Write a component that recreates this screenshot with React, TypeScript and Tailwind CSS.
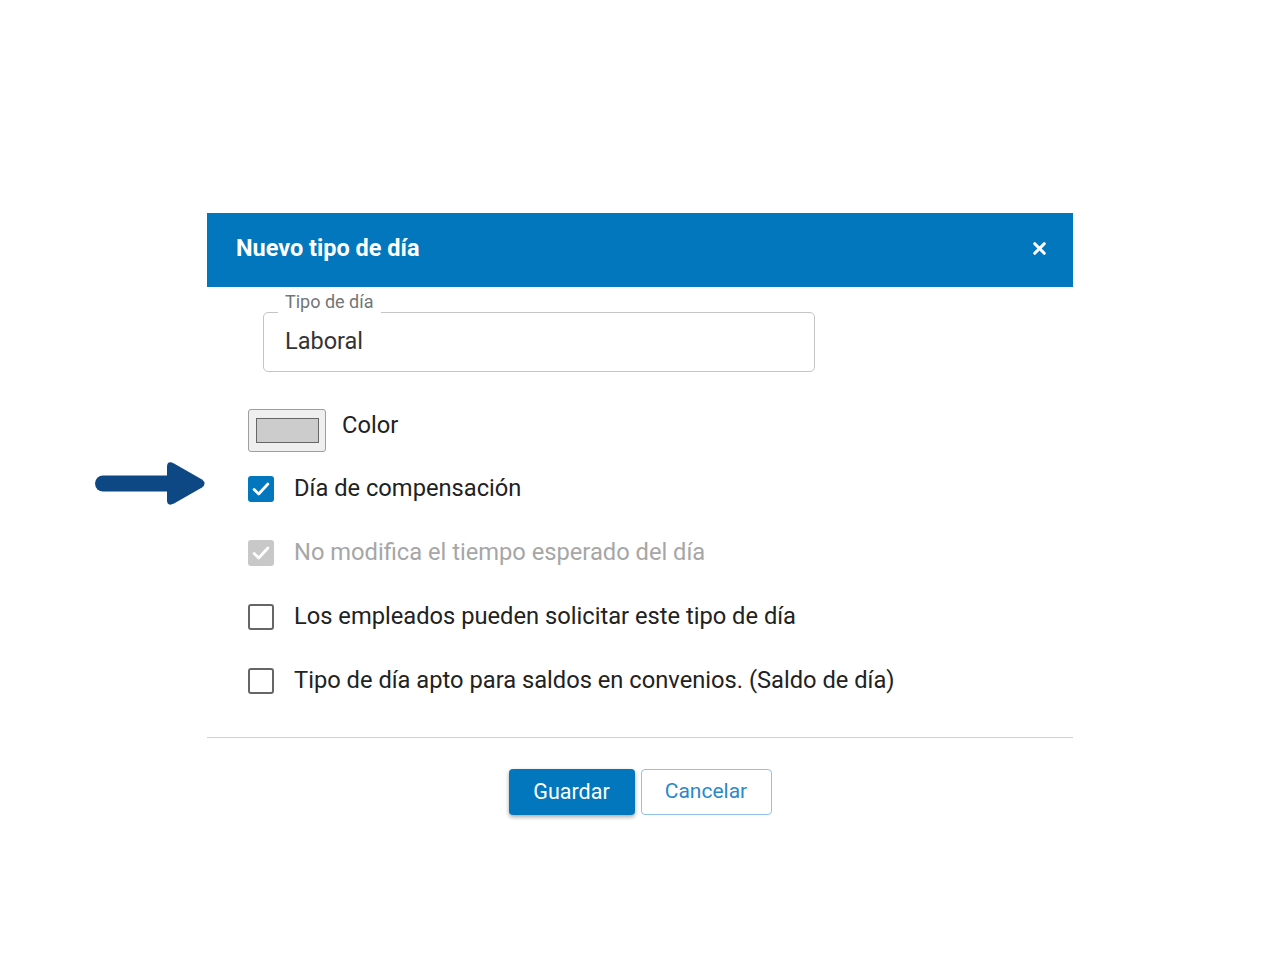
import { X } from 'lucide-react';

const CheckMark = () => (
  <svg viewBox="0 0 24 24" className="w-[22px] h-[22px]" fill="none" stroke="white" strokeWidth="3" strokeLinecap="round" strokeLinejoin="round">
    <path d="M4.5 12.5l5 5L19.5 6.5" />
  </svg>
);

const Arrow = () => (
  <svg width="112" height="46" viewBox="0 0 112 46" className="block">
    <path d="M8 22.5h64" stroke="#0d4784" strokeWidth="16" strokeLinecap="round" />
    <path d="M72 6 Q72 -1 79 2.5 L107 18.5 Q112 22.5 107 26.5 L79 42.5 Q72 46 72 39 Z" fill="#0d4784" />
  </svg>
);

type Option = { label: string; checked: boolean; disabled?: boolean };

const options: Option[] = [
  { label: 'Día de compensación', checked: true },
  { label: 'No modifica el tiempo esperado del día', checked: true, disabled: true },
  { label: 'Los empleados pueden solicitar este tipo de día', checked: false },
  { label: 'Tipo de día apto para saldos en convenios. (Saldo de día)', checked: false },
];

const App = () => {
  return (
    <div className="min-h-[966px] bg-white pt-[213px] font-['Roboto',sans-serif]">
      <div className="ml-[207px] w-[866px] bg-white">
        {/* header */}
        <div className="h-[74px] bg-[#0277bd] flex items-center justify-between pl-[29px] pr-[24px]">
          <h1 className="text-white text-[23.5px] font-bold -mt-[3px]">Nuevo tipo de día</h1>
          <X className="w-[19px] h-[19px] text-white -mt-[3px]" strokeWidth={4} />
        </div>

        {/* body */}
        <div className="pt-[25px]">
          <div className="relative ml-[56px] w-[552px] h-[60px] border border-[#c4c4c4] rounded-[5px] flex items-center px-[21px]">
            <span className="absolute left-[14px] -top-[22px] bg-white px-[7px] text-[18px] leading-[22px] text-[#757575]">
              Tipo de día
            </span>
            <span className="text-[23.5px] text-[#333]">Laboral</span>
          </div>

          <div className="ml-[41px] mt-[37px] flex items-center gap-[16px]">
            <div className="w-[78px] h-[43px] bg-[#efefef] border border-[#9e9e9e] rounded-[3px] flex items-center justify-center">
              <div className="w-[63px] h-[25px] bg-[#cccccc] border border-[#666]" />
            </div>
            <span className="text-[23.7px] text-[#222] -mt-[10px]">Color</span>
          </div>

          <div className="ml-[41px] mt-[24px] flex flex-col gap-[38px]">
            {options.map((o, i) => (
              <div key={o.label} className="relative h-[26px] flex items-center gap-[20px]">
                {i === 0 && (
                  <div className="absolute -left-[153px] -top-[15px]">
                    <Arrow />
                  </div>
                )}
                {o.checked ? (
                  <div
                    className={
                      o.disabled
                        ? 'w-[26px] h-[26px] rounded-[3px] bg-[#c8c8c8] flex items-center justify-center'
                        : 'w-[26px] h-[26px] rounded-[3px] bg-[#0277bd] flex items-center justify-center'
                    }
                  >
                    <CheckMark />
                  </div>
                ) : (
                  <div className="w-[26px] h-[26px] rounded-[3px] border-2 border-[#666]" />
                )}
                <span className={o.disabled ? 'text-[23.7px] text-[#a6a6a6]' : 'text-[23.7px] text-[#222]'}>
                  {o.label}
                </span>
              </div>
            ))}
          </div>

          <div className="mt-[43px] border-t border-[#d0d0d0]" />

          <div className="pt-[31px] pb-[30px] flex justify-center gap-[6px]">
            <button className="w-[126px] h-[46px] rounded-[4px] bg-[#0277bd] text-white text-[21.5px] shadow-[0_2px_4px_rgba(0,0,0,0.35)]">
              Guardar
            </button>
            <button className="w-[131px] h-[46px] rounded-[4px] border border-[#8fc3e6] bg-white text-[#2a88cc] text-[21px]">
              Cancelar
            </button>
          </div>
        </div>
      </div>
    </div>
  );
};

export default App;
